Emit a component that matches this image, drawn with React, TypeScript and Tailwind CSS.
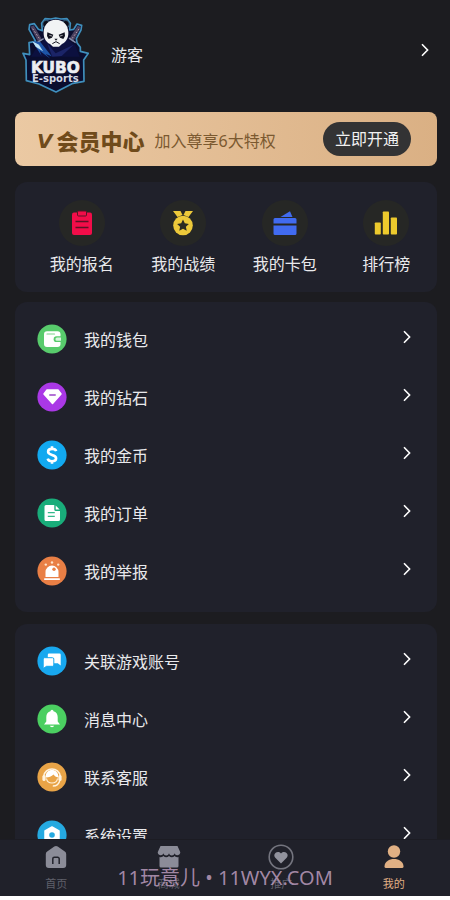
import type { ReactNode } from "react";

type Item = {
  label: string;
  icon: ReactNode;
};

function Chevron() {
  return (
    <svg width="8" height="14" viewBox="0 0 8 14" fill="none" stroke="#fff" strokeWidth="1.6" aria-hidden="true">
      <path d="M1 1.2 6.6 7 1 12.8" />
    </svg>
  );
}

function Logo() {
  return (
    <svg width="67" height="77" viewBox="21 18 201 231" role="img" aria-label="KUBO E-sports">
      {/* shield */}
      <path
        d="M44 44 58 41 70 58 82 62 80 40 90 26 108 27 122 24 138 27 156 26 166 40 164 60 176 58 186 42 200 46 198 60 184 86 186 98 196 112 196 124 220 130 206 150 207 214 174 220 123 246 72 222 34 212 33 150 24 130 44 134 42 98 62 94 42 58Z"
        fill="#0a0d2e"
        stroke="#3f8fbd"
        strokeWidth="5"
        strokeLinejoin="round"
      />
      {/* swords */}
      <path d="M46 50 56 46 82 90 70 97Z" fill="#4a4260" />
      <path d="M198 51 188 47 162 88 174 96Z" fill="#4a4260" />
      <path d="M53 56 76 90M192 57 168 90" stroke="#b99aa6" strokeWidth="3" strokeDasharray="5 5" />
      <path d="M62 100 86 86M182 98 162 84" stroke="#8791ae" strokeWidth="4" />
      {/* cloak */}
      <path d="M72 100 94 86 122 112 154 86 180 104 194 140 48 140Z" fill="#0c103f" />
      <path d="M52 94 76 96 110 139 92 132 106 146 74 122 80 138Z" fill="#1d55a8" />
      <path d="M52 94 72 104 84 124 62 110Z" fill="#bfe4f5" />
      <path d="M96 100 122 130 176 104 140 138 112 140Z" fill="#1b2467" />
      {/* panda */}
      <circle cx="94" cy="42" r="11" fill="#0b0c19" stroke="#4f8cae" strokeWidth="2" />
      <circle cx="152" cy="42" r="11" fill="#0b0c19" stroke="#4f8cae" strokeWidth="2" />
      <path
        d="M122 29C145 29 159 44 160 66C161 84 153 96 141 102L132 110H114L105 102C92 96 85 83 86 66C87 44 101 29 122 29Z"
        fill="#f1f3f4"
      />
      <path d="M97 67 115 74 111 83 101 87 96 78ZM149 67 131 74 135 83 145 87 150 78Z" fill="#11131f" />
      <path d="M103 76 111 78M143 76 135 78" stroke="#e8e8e8" strokeWidth="2" />
      <path d="M118 86H128L123 92Z" fill="#161722" />
      <path d="M112 101 123 95 134 101" fill="none" stroke="#161722" strokeWidth="3" />
      {/* lettering */}
      <g fontFamily="'DejaVu Sans', sans-serif" fontWeight="700" textAnchor="middle">
        <text x="121" y="190" fontSize="46" fill="#eceef2" stroke="#eceef2" strokeWidth="2">
          KUBO
        </text>
        <text x="121" y="215" fontSize="30" fill="#d5d9e6">
          E-sports
        </text>
      </g>
    </svg>
  );
}

const shortcuts: Item[] = [
  {
    label: "我的报名",
    icon: (
      <svg width="24" height="26" viewBox="0 0 24 26" aria-hidden="true">
        <rect x="2" y="2.5" width="20" height="22.5" rx="2" fill="#f20d49" />
        <rect x="7.5" y="1" width="9" height="5" rx="1" fill="#f20d49" stroke="#5a1325" />
        <path d="M5.5 11.5H18.5M5.5 17.5H18.5" stroke="#5a1325" strokeWidth="1.5" />
      </svg>
    ),
  },
  {
    label: "我的战绩",
    icon: (
      <svg width="24" height="26" viewBox="0 0 24 26" aria-hidden="true">
        <path d="M2 1H9.5L11.5 5 6.500 7ZM22 1H14.5L12.5 5 17.5 7Z" fill="#edc93a" />
        <circle cx="12" cy="15.5" r="9.8" fill="#edc93a" />
        <path
          d="M12 9.6 13.8 13.3 17.900 13.9 14.9 16.7 15.7 20.7 12 18.7 8.3 20.7 9.1 16.7 6.1 13.9 10.2 13.3Z"
          fill="#2a2a22"
        />
      </svg>
    ),
  },
  {
    label: "我的卡包",
    icon: (
      <svg width="24" height="26" viewBox="0 0 24 26" fill="#416bf0" aria-hidden="true">
        <path d="M7.5 7 17 1.2 19.5 7Z" />
        <path d="M2 8H22A1.5 1.5 0 0 1 23.5 9.5V13.5H.5V9.5A1.5 1.5 0 0 1 2 8Z" />
        <path d="M.5 15.5H23.5V23.5A1.5 1.5 0 0 1 22 25H2A1.5 1.5 0 0 1 .5 23.5Z" />
      </svg>
    ),
  },
  {
    label: "排行榜",
    icon: (
      <svg width="24" height="26" viewBox="0 0 24 26" fill="#edca2d" aria-hidden="true">
        <rect x=".8" y="12.5" width="6" height="12" rx=".8" />
        <rect x="8.8" y="1.5" width="6.2" height="23" rx=".8" />
        <rect x="16.8" y="7.5" width="6.2" height="17" rx=".8" />
      </svg>
    ),
  },
];

const walletItems: Item[] = [
  {
    label: "我的钱包",
    icon: (
      <svg width="30" height="30" viewBox="0 0 30 30" aria-hidden="true">
        <circle cx="15" cy="15" r="14.6" fill="#58cb6c" />
        <rect x="7" y="7.2" width="16.5" height="15.8" rx="3" fill="#fff" />
        <path d="M10 10H17.5" stroke="#7bd38a" strokeWidth="1.2" strokeLinecap="round" />
        <path d="M24 12.3H19.5A2.8 2.8 0 0 0 19.5 18H24Z" fill="#58cb6c" />
        <path d="M24 13.6H20A1.6 1.6 0 0 0 20 16.8H24Z" fill="#d9f6de" />
      </svg>
    ),
  },
  {
    label: "我的钻石",
    icon: (
      <svg width="30" height="30" viewBox="0 0 30 30" aria-hidden="true">
        <circle cx="15" cy="15" r="14.6" fill="#aa38e6" />
        <path d="M10 8H21L24 12 15.5 21.5 7 12Z" fill="#fff" stroke="#fff" strokeWidth="1.5" strokeLinejoin="round" />
        <path d="M12.8 13H18.2" stroke="#9a45c8" strokeWidth="1.5" strokeLinecap="round" />
      </svg>
    ),
  },
  {
    label: "我的金币",
    icon: (
      <svg width="30" height="30" viewBox="0 0 30 30" fill="none" aria-hidden="true">
        <circle cx="15" cy="15" r="14.6" fill="#12a9f0" />
        <path
          d="M19.2 11.2C18.7 9.7 17.2 8.9 15 8.9C12.7 8.9 11.1 10 11.1 11.8C11.1 15.8 19.1 14 19.1 18.2C19.1 20 17.4 21.2 15 21.2C12.7 21.2 11.1 20.2 10.7 18.6M15 6.3V9M15 21V23.7"
          stroke="#fff"
          strokeWidth="2.6"
        />
      </svg>
    ),
  },
  {
    label: "我的订单",
    icon: (
      <svg width="30" height="30" viewBox="0 0 30 30" aria-hidden="true">
        <circle cx="15" cy="15" r="14.6" fill="#19ad7a" />
        <path
          d="M9 7H17.3V11.5A1.5 1.5 0 0 0 18.8 13H23V21.5A1.5 1.5 0 0 1 21.5 23H9A1.5 1.5 0 0 1 7.5 21.5V8.5A1.5 1.5 0 0 1 9 7Z"
          fill="#fff"
        />
        <path d="M18.7 7.5 22.6 11.5H18.7Z" fill="#fff" />
        <path d="M10.8 14.6H17.8M10.8 18.4H17.8" stroke="#35b98b" strokeWidth="1.4" />
      </svg>
    ),
  },
  {
    label: "我的举报",
    icon: (
      <svg width="30" height="30" viewBox="0 0 30 30" aria-hidden="true">
        <circle cx="15" cy="15" r="14.6" fill="#e97f45" />
        <path d="M8.5 21V16A6.5 6.5 0 0 1 21.5 16V21Z" fill="#fff" />
        <rect x="7" y="22.3" width="16" height="1.8" rx=".8" fill="#fff" />
        <circle cx="17" cy="13.3" r="1.7" fill="#e97f45" />
        <circle cx="8.8" cy="8.6" r="1.2" fill="#ffe3c9" />
        <circle cx="15" cy="6.5" r="1.2" fill="#ffe3c9" />
        <circle cx="21.2" cy="8.6" r="1.2" fill="#ffe3c9" />
      </svg>
    ),
  },
];

const accountItems: Item[] = [
  {
    label: "关联游戏账号",
    icon: (
      <svg width="30" height="30" viewBox="0 0 30 30" aria-hidden="true">
        <circle cx="15" cy="15" r="14.6" fill="#18a8ef" />
        <path
          d="M12 7.5H22.5A1.2 1.2 0 0 1 23.7 8.7V19.5L20.8 17.3H12A1.2 1.2 0 0 1 10.8 16.1V8.7A1.2 1.2 0 0 1 12 7.5Z"
          fill="#fff"
        />
        <path
          d="M7.5 11.7H15.5A1.3 1.3 0 0 1 16.8 13V19A1.3 1.3 0 0 1 15.5 20.3H9.5L6.2 22.6V13A1.3 1.3 0 0 1 7.5 11.7Z"
          fill="#fff"
          stroke="#18a8ef"
        />
      </svg>
    ),
  },
  {
    label: "消息中心",
    icon: (
      <svg width="30" height="30" viewBox="0 0 30 30" fill="#fff" aria-hidden="true">
        <circle cx="15" cy="15" r="14.6" fill="#4bcf61" />
        <path d="M13.5 7.2A1.5 1.5 0 0 1 16.5 7.2C19.2 7.9 20.7 10 20.7 13V17.5L23 20.5H7L9.3 17.5V13C9.3 10 10.8 7.9 13.5 7.2Z" />
        <path d="M12.8 21.8H17.2C16.6 23.6 13.4 23.6 12.8 21.8Z" />
      </svg>
    ),
  },
  {
    label: "联系客服",
    icon: (
      <svg width="30" height="30" viewBox="0 0 30 30" fill="none" aria-hidden="true">
        <circle cx="15" cy="15" r="14.6" fill="#e9a447" />
        <path d="M6.8 14A8.3 8.3 0 0 1 23.2 14" stroke="#fff3df" strokeWidth="1.6" />
        <path d="M8.8 15.5C7.500 5.500 22.500 5.500 21.200 15.500C19 15 17.500 14 16.500 12.500C14.500 14.500 12 15.500 8.800 15.500Z" fill="#fff" />
        <rect x="5.4" y="13" width="3.2" height="6" rx="1.6" fill="#fff3df" />
        <rect x="21.4" y="13" width="3.2" height="6" rx="1.6" fill="#fff3df" />
        <path d="M9.5 16.5C10.3 22.500 19.7 22.500 20.5 16.5" stroke="#fff3df" strokeWidth="1.1" />
        <path d="M22.8 18.5C22 22.5 19.5 24 15.8 24" stroke="#fff3df" strokeWidth="1.3" />
      </svg>
    ),
  },
  {
    label: "系统设置",
    icon: (
      <svg width="30" height="30" viewBox="0 0 30 30" aria-hidden="true">
        <circle cx="15" cy="15" r="14.6" fill="#25a9e0" />
        <path d="M15 7 22 11V19L15 23 8 19V11Z" fill="#fff" stroke="#fff" strokeWidth="1.5" strokeLinejoin="round" />
        <circle cx="15" cy="15" r="2.8" fill="#25a9e0" />
      </svg>
    ),
  },
];

const tabs: Item[] = [
  {
    label: "首页",
    icon: (
      <svg width="26" height="26" viewBox="0 0 26 26" aria-hidden="true">
        <path
          d="M11.3 2.6A3 3 0 0 1 14.7 2.6L21.8 7.5A3 3 0 0 1 23.2 10V21A3 3 0 0 1 20.2 24H5.8A3 3 0 0 1 2.8 21V10A3 3 0 0 1 4.2 7.5Z"
          fill="#8b8c98"
        />
        <path
          d="M9.8 20V14.8A1.5 1.5 0 0 1 11.3 13.3H14.7A1.5 1.5 0 0 1 16.2 14.8V20"
          fill="none"
          stroke="#22232c"
          strokeWidth="1.5"
        />
      </svg>
    ),
  },
  {
    label: "商城",
    icon: (
      <svg width="26" height="26" viewBox="0 0 26 26" fill="#8b8c98" aria-hidden="true">
        <path d="M4.5 2H21.5L24.3 8.3C24.3 11.8 19.2 12.3 18.6 9.3C17.8 12.3 13.8 12.3 13 9.3C12.2 12.3 8.2 12.3 7.4 9.3C6.8 12.3 1.7 11.8 1.7 8.3Z" />
        <path d="M3.5 13C5.3 13.5 6.6 13 7.4 12C9 13.6 11.4 13.6 13 12C14.6 13.6 17 13.6 18.6 12C19.4 13 20.7 13.5 22.5 13V22A1.5 1.5 0 0 1 21 23.5H5A1.5 1.5 0 0 1 3.5 22Z" />
      </svg>
    ),
  },
  {
    label: "推广",
    icon: (
      <svg width="26" height="26" viewBox="0 0 26 26" fill="none" aria-hidden="true">
        <circle cx="13" cy="13" r="11.8" stroke="#74757f" strokeWidth="1.6" />
        <path d="M13 19.5 7.3 13.8C4.2 10.3 9.3 5.5 13 9.5C16.7 5.5 21.8 10.3 18.7 13.8Z" fill="#91929d" />
      </svg>
    ),
  },
  {
    label: "我的",
    icon: (
      <svg width="26" height="26" viewBox="0 0 26 26" fill="#e0b084" aria-hidden="true">
        <circle cx="13" cy="7.5" r="6.2" />
        <path d="M3.5 22.5C3.5 12.5 22.5 12.5 22.5 22.5A1.5 1.5 0 0 1 21 24H5A1.5 1.5 0 0 1 3.5 22.5Z" />
      </svg>
    ),
  },
];

function MenuCard({ items }: { items: Item[] }) {
  return (
    <ul className="rounded-xl bg-[#20212b] pt-2 pb-3">
      {items.map((item) => (
        <li key={item.label}>
          <a href="#" className="flex h-[58px] items-center pr-[26px] pl-[22px] text-base text-[#e9e9ec]">
            {item.icon}
            <span className="ml-[17px] flex-1 pt-0.5">{item.label}</span>
            <span className="pb-1">
              <Chevron />
            </span>
          </a>
        </li>
      ))}
    </ul>
  );
}

export default function App() {
  return (
    <div className="h-screen bg-white pb-1 font-['Noto_Sans','Noto_Sans_CJK_SC',sans-serif]">
      <div className="relative flex h-full flex-col bg-[#1c1c20]">
        <main className="min-h-0 flex-1 overflow-y-auto px-[13px] [scrollbar-width:none]">
          {/* profile */}
          <a href="#" className="flex h-28 items-center pr-2 pb-1 pl-[9px] text-base text-[#e9e9ec]">
            <Logo />
            <span className="ml-[22px] flex-1 pt-0.5">游客</span>
            <span className="pb-2">
              <Chevron />
            </span>
          </a>

          <div className="pl-0.5">
            {/* vip banner */}
            <section className="flex h-[54px] items-center rounded-lg bg-linear-to-r from-[#ebc9a3] to-[#dab084] pr-[26px] pl-[22px]">
              <h2 className="flex items-center gap-1 pt-1 text-[22px] font-black whitespace-nowrap text-[#704b1b]">
                <i className="font-['DejaVu_Sans'] text-xl">V</i>
                会员中心
              </h2>
              <p className="ml-[10px] flex-1 pt-1 text-base whitespace-nowrap text-[#7b5930]">加入尊享6大特权</p>
              <button
                type="button"
                className="h-[34px] rounded-full bg-[#333334] px-3 text-base whitespace-nowrap text-[#f1f1f1]"
              >
                立即开通
              </button>
            </section>

            {/* shortcuts */}
            <nav className="mt-4 grid grid-cols-4 rounded-xl bg-[#20212b] pt-[18px] pb-4 pl-4">
              {shortcuts.map((item) => (
                <a key={item.label} href="#" className="flex flex-col items-center gap-1.5 text-base text-[#e9e9ec]">
                  <span className="flex size-[46px] items-center justify-center rounded-full bg-[#262725]">
                    {item.icon}
                  </span>
                  {item.label}
                </a>
              ))}
            </nav>

            <div className="mt-[10px] space-y-3">
              <MenuCard items={walletItems} />
              <MenuCard items={accountItems} />
            </div>
          </div>
        </main>

        {/* tab bar */}
        <nav className="grid h-[57px] grid-cols-4 border-t border-[#1c1c23] bg-[#20212a]">
          {tabs.map((tab) => (
            <a
              key={tab.label}
              href="#"
              className={
                tab.label === "我的"
                  ? "flex flex-col items-center gap-1.5 pt-1 text-[11px] text-[#e0b084]"
                  : "flex flex-col items-center gap-1.5 pt-1 text-[11px] text-[#5f606a]"
              }
            >
              {tab.icon}
              {tab.label}
            </a>
          ))}
        </nav>

        <p className="pointer-events-none absolute inset-x-0 bottom-1 text-center text-xl whitespace-nowrap text-[#b496b6]/90">
          11玩意儿 • 11WYX.COM
        </p>
      </div>
    </div>
  );
}
